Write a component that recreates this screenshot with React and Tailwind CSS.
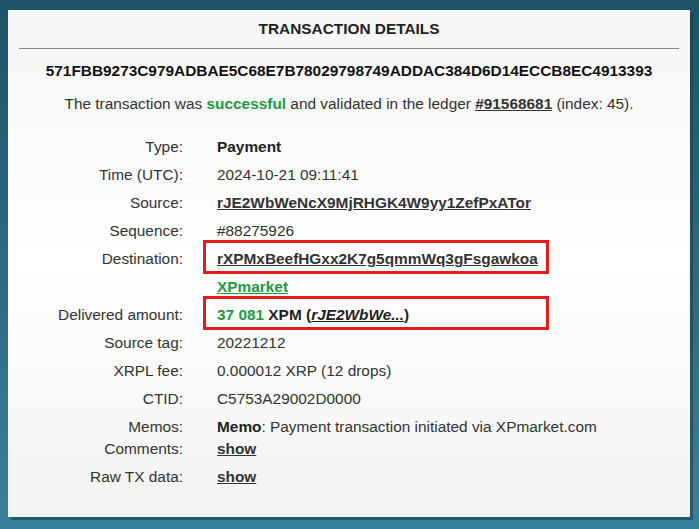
// App.jsx — transaction details card

const ROWS = [
  { label: 'Type:', value: <span className="font-bold text-[#222]">Payment</span> },
  { label: 'Time (UTC):', value: '2024-10-21 09:11:41' },
  { label: 'Source:', value: <a className="font-bold underline text-[#333]">rJE2WbWeNcX9MjRHGK4W9yy1ZefPxATor</a> },
  { label: 'Sequence:', value: '#88275926' },
  {
    label: 'Destination:',
    boxed: true,
    value: <a className="font-bold underline text-[#333]">rXPMxBeefHGxx2K7g5qmmWq3gFsgawkoa</a>,
  },
  { label: '', value: <a className="font-bold underline text-[#1f9a3f]">XPmarket</a> },
  {
    label: 'Delivered amount:',
    boxed: true,
    value: (
      <span>
        <span className="font-bold text-[#1f9a3f]">37 081</span>{' '}
        <span className="font-bold text-[#222]">XPM</span>{' '}
        <span className="font-bold text-[#222]">(<a className="italic underline">rJE2WbWe...</a>)</span>
      </span>
    ),
  },
  { label: 'Source tag:', value: '20221212' },
  { label: 'XRPL fee:', value: '0.000012 XRP (12 drops)' },
  { label: 'CTID:', value: 'C5753A29002D0000' },
  {
    label: 'Memos:',
    value: (
      <span>
        <span className="font-bold text-[#222]">Memo</span>: Payment transaction initiated via XPmarket.com
      </span>
    ),
  },
  { label: 'Comments:', short: true, value: <a className="font-bold underline text-[#333]">show</a> },
  { label: 'Raw TX data:', value: <a className="font-bold underline text-[#333]">show</a> },
]

export default function App() {
  return (
    <div
      className="w-[699px] h-[529px] bg-gradient-to-b from-[#1e5367] to-[#3b809a] pt-[10px] pl-[8px]"
      style={{ fontFamily: '"Liberation Sans", Arial, sans-serif' }}
    >
      <div className="w-[682px] h-[507px] bg-gradient-to-b from-[#f6f6f6] via-[#ffffff] to-[#f3f3f3] shadow-[3px_3px_0_rgba(20,60,75,0.55)] text-[15.4px] text-[#333]">
        <div className="h-[38px] flex items-center justify-center font-bold text-[#222]">
          TRANSACTION DETAILS
        </div>
        <div className="mx-[11px] h-px bg-[#8a8a8a]" />
        <div className="h-[44px] flex items-center justify-center font-bold text-[#111]">
          571FBB9273C979ADBAE5C68E7B78029798749ADDAC384D6D14ECCB8EC4913393
        </div>
        <div className="h-[22px] flex items-center justify-center text-[#333]">
          The transaction was&nbsp;<span className="font-bold text-[#1f9a3f]">successful</span>&nbsp;and validated in the ledger&nbsp;
          <a className="font-bold underline text-[#333]">#91568681</a>&nbsp;(index: 45).
        </div>
        <div className="mt-[18px]">
          {ROWS.map((r, i) => (
            <div
              key={i}
              className={`grid grid-cols-[175px_1fr] gap-x-[34px] items-center ${r.short ? 'h-[22px] -mt-[4px] mb-[4px]' : 'h-[28px]'}`}
            >
              <div className="text-right text-[#333]">{r.label}</div>
              <div className="relative text-[#333]">
                {r.value}
                {r.boxed && (
                  <div className="absolute -left-[14px] -top-[7px] w-[346px] h-[34px] border-[3px] border-[#e21b1b]" />
                )}
              </div>
            </div>
          ))}
        </div>
      </div>
    </div>
  )
}
